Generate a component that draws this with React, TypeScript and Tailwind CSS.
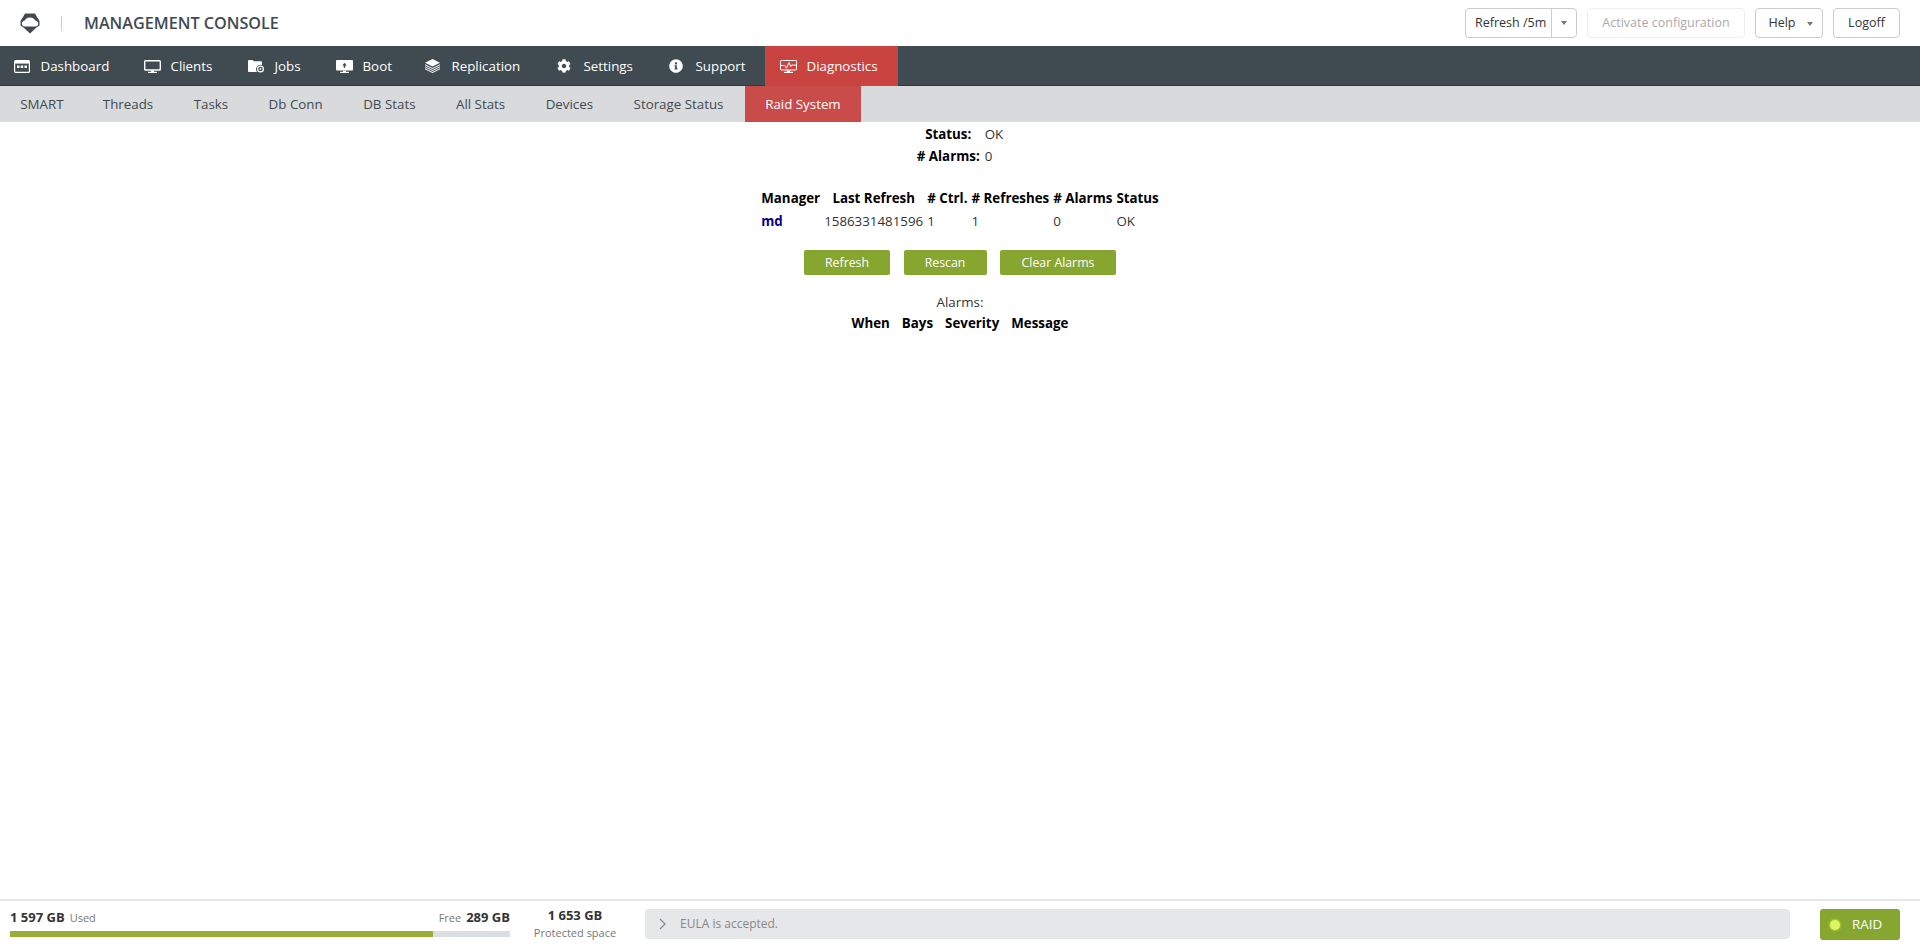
import { FaCog, FaInfoCircle } from "react-icons/fa";

const font = "font-['Open_Sans',sans-serif]";

function IDash() {
  return (
    <svg width="16" height="13" viewBox="0 0 16 13" className="shrink-0">
      <rect x="0.6" y="0.6" width="14.8" height="11.8" rx="1" fill="none" stroke="#fff" strokeWidth="1.2" />
      <rect x="1" y="1" width="14" height="2.600" fill="#fff" />
      <rect x="3" y="5.500" width="2.500" height="2.500" fill="#fff" />
      <rect x="6.700" y="5.500" width="2.500" height="2.500" fill="#fff" />
      <rect x="10.500" y="5.500" width="2.500" height="2.500" fill="#fff" />
    </svg>
  );
}
function IMon() {
  return (
    <svg width="17" height="13" viewBox="0 0 17 13" className="shrink-0">
      <rect x="0.7" y="0.7" width="15.6" height="9.3" rx="0.8" fill="none" stroke="#fff" strokeWidth="1.4" />
      <rect x="7" y="10.500" width="3" height="1.500" fill="#fff" />
      <rect x="4" y="11.800" width="9" height="1.200" fill="#fff" />
    </svg>
  );
}
function IJobs() {
  return (
    <svg width="16" height="13" viewBox="0 0 16 13" className="shrink-0">
      <path d="M0 1a1 1 0 0 1 1-1h3.500l1.500 1.300h7a1 1 0 0 1 1 1v2.700a4.500 4.500 0 0 0-5 7H1a1 1 0 0 1-1-1z" fill="#fff" />
      <circle cx="12.500" cy="9" r="2.900" fill="none" stroke="#fff" strokeWidth="1.200" />
      <circle cx="12.500" cy="9" r="0.900" fill="#fff" />
    </svg>
  );
}
function IBoot() {
  return (
    <svg width="17" height="13" viewBox="0 0 17 13" className="shrink-0">
      <path d="M1 0h15a1 1 0 0 1 1 1v8.500a1 1 0 0 1-1 1H1a1 1 0 0 1-1-1V1a1 1 0 0 1 1-1z" fill="#fff" />
      <path d="M8.500 2.800l2.200 2.700H9.300v2.300H7.700V5.500H6.300z" fill="#3f4b51" />
      <rect x="7" y="10.500" width="3" height="1.500" fill="#fff" />
      <rect x="4" y="11.800" width="9" height="1.200" fill="#fff" />
    </svg>
  );
}
function ILayers() {
  return (
    <svg width="15" height="14" viewBox="0 0 15 14" className="shrink-0">
      <path d="M7.500 0L15 3.800 7.500 7.600 0 3.800z" fill="#fff" />
      <path d="M0 5.200l7.500 3.800L15 5.200v1l-7.500 3.800L0 6.200z" fill="#fff" />
      <path d="M0 7.300l7.500 3.800L15 7.300v1l-7.500 3.800L0 8.300z" fill="#fff" />
      <path d="M0 9.300L7.500 13 15 9.300v1L7.500 14 0 10.300z" fill="#fff" />
    </svg>
  );
}
function IDiag() {
  return (
    <svg width="17" height="13" viewBox="0 0 17 13" className="shrink-0">
      <rect x="0.5" y="0.5" width="16" height="9.500" rx="0.6" fill="none" stroke="#fff" strokeWidth="1" />
      <path d="M1 5.500h4l1.500 2.800L9 2.500l1.800 4 1-1.400H16" fill="none" stroke="#fff" strokeWidth="1" />
      <rect x="7" y="10.500" width="3" height="1.500" fill="#fff" />
      <rect x="4" y="11.800" width="9" height="1.200" fill="#fff" />
    </svg>
  );
}

function Caret() {
  return <span className="w-0 h-0 border-x-[3.5px] border-x-transparent border-t-[4px] border-t-[#777]" />;
}

function NavItem({ icon, label, active, w, pl = "pl-[15px]" }: { icon: React.ReactNode; label: string; active?: boolean; w: string; pl?: string }) {
  return (
    <div className={`flex items-center h-full ${pl} text-[13.33px] font-medium text-white ${w} ${active ? "bg-[#c94441]" : ""}`}>
      <span className="w-[26.5px] flex items-center">{icon}</span>
      <span className="pt-px">{label}</span>
    </div>
  );
}

const sub = ["SMART", "Threads", "Tasks", "Db Conn", "DB Stats", "All Stats", "Devices", "Storage Status"];

export default function App() {
  return (
    <div className={`h-screen flex flex-col bg-white overflow-hidden text-[#333] ${font}`}>
      <header className="h-[46px] shrink-0 flex items-center pl-[20px] pr-[20px]">
        <svg width="20" height="21" viewBox="0 0 20 21" className="shrink-0">
          <path d="M5 0.500h10l2 3.500 2.500 4v4.500l-3 2L10 20.500 3.500 14.500l-3-2V8L3 4z" fill="#3f4b51" />
          <path d="M10 4.500c3 0 4.600 1.500 5.300 3 1.700.4 2.900 1.600 2.900 3.200 0 1.600-1.300 2.800-3 2.800H4.800c-1.700 0-3-1.200-3-2.800 0-1.600 1.200-2.800 2.900-3.200.7-1.500 2.300-3 5.300-3z" fill="#fff" />
        </svg>
        <span className="w-px h-[15px] bg-[#ccc] ml-[21px]" />
        <span className="ml-[22px] text-[16.2px] font-semibold text-[#3f4b51]">MANAGEMENT CONSOLE</span>
        <div className="ml-auto flex items-center text-[12.5px]">
          <div className="flex h-[30px] border border-[#ccc] rounded-[4px] items-stretch">
            <span className="w-[86px] pl-[9px] pt-px flex items-center border-r border-[#ccc]">Refresh /5m</span>
            <span className="w-[24px] flex items-center justify-center"><Caret /></span>
          </div>
          <span className="ml-[10px] w-[158px] h-[30px] pt-px flex items-center justify-center border border-[#eee] rounded-[4px] text-[#aaa]">Activate configuration</span>
          <span className="ml-[10px] w-[68px] h-[30px] pt-px pl-[3px] flex items-center justify-center gap-[11px] border border-[#ccc] rounded-[4px]">Help <Caret /></span>
          <span className="ml-[10px] w-[67px] h-[30px] pt-px flex items-center justify-center border border-[#ccc] rounded-[4px]">Logoff</span>
        </div>
      </header>

      <nav className="h-[40px] shrink-0 flex bg-[#3f4b51] shadow-[inset_0_-1px_0_#2f393e]">
        <NavItem w="w-[129px]" pl="pl-[14px]" icon={<IDash />} label="Dashboard" />
        <NavItem w="w-[104px]" icon={<IMon />} label="Clients" />
        <NavItem w="w-[88px]" icon={<IJobs />} label="Jobs" />
        <NavItem w="w-[89px]" icon={<IBoot />} label="Boot" />
        <NavItem w="w-[132px]" icon={<ILayers />} label="Replication" />
        <NavItem w="w-[112px]" icon={<FaCog size={14} color="#fff" />} label="Settings" />
        <NavItem w="w-[111px]" icon={<FaInfoCircle size={14} color="#fff" />} label="Support" />
        <NavItem w="w-[133px]" active icon={<IDiag />} label="Diagnostics" />
      </nav>

      <div className="h-[36px] shrink-0 flex bg-[#d9dadc] text-[13.33px] text-[#3f4b51]">
        {sub.map((s, i) => (
          <span key={s} className={`pl-[20.25px] pt-px flex items-center ${i === 0 ? "pr-[19px]" : "pr-[20.25px]"}`}>{s}</span>
        ))}
        <span className="ml-px px-[20.5px] pt-px flex items-center bg-[#c94c4a] text-white font-medium">Raid System</span>
      </div>

      <main className="flex-1 flex flex-col items-center text-[13.33px] leading-[18px] text-black">
        <table className="border-separate border-spacing-[2px]">
          <tbody>
            <tr><th className="p-px font-bold">Status:</th><td className="p-px pl-[2px] text-[#333]">OK</td></tr>
            <tr><th className="p-px font-bold"># Alarms:</th><td className="p-px pl-[2px] text-[#333]">0</td></tr>
          </tbody>
        </table>
        <table className="border-separate border-spacing-[2px] mt-[18px]">
          <thead>
            <tr>
              {["Manager", "Last Refresh", "# Ctrl.", "# Refreshes", "# Alarms", "Status"].map((h) => (
                <th key={h} className="p-px font-bold">{h}</th>
              ))}
            </tr>
          </thead>
          <tbody className="text-[#333]">
            <tr>
              <td className="p-px pt-[2px] font-bold text-[#00008b]">md</td>
              <td className="p-px pt-[2px]">1586331481596</td>
              <td className="p-px pt-[2px]">1</td>
              <td className="p-px pt-[2px]">1</td>
              <td className="p-px pt-[2px]">0</td>
              <td className="p-px pt-[2px]">OK</td>
            </tr>
          </tbody>
        </table>
        <div className="flex mt-[17px] gap-[13.5px] text-[12.3px] font-medium text-white">
          <span className="w-[86px] h-[25px] rounded-[2px] bg-[#87a62f] flex items-center justify-center">Refresh</span>
          <span className="w-[83px] h-[25px] rounded-[2px] bg-[#87a62f] flex items-center justify-center">Rescan</span>
          <span className="w-[116px] h-[25px] rounded-[2px] bg-[#87a62f] flex items-center justify-center">Clear Alarms</span>
        </div>
        <div className="mt-[18px] text-[#333]">Alarms:</div>
        <table className="border-separate border-spacing-[2px]">
          <thead>
            <tr>
              {["When", "Bays", "Severity", "Message"].map((h) => (
                <th key={h} className="py-px px-[5px] font-bold">{h}</th>
              ))}
            </tr>
          </thead>
        </table>
      </main>

      <footer className="h-[47px] shrink-0 flex items-start border-t-2 border-[#e4e5e6] pl-[10px] pr-[20px] text-[#333]">
        <div className="w-[500px] mt-[7px]">
          <div className="flex items-baseline h-[21px]">
            <span className="text-[13px] font-bold">1 597 GB</span>
            <span className="ml-[5px] text-[11px] text-[#777]">Used</span>
            <span className="ml-auto text-[11px] text-[#777]">Free</span>
            <span className="ml-[5px] text-[13px] font-bold">289 GB</span>
          </div>
          <div className="h-[6px] mt-[2px] bg-[#dcdfe2]">
            <div className="h-full w-[84.500%] bg-[#97ad35]" />
          </div>
        </div>
        <div className="w-[130px] mr-[5px] flex flex-col items-center mt-[5px]">
          <span className="text-[13px] font-bold leading-[18px]">1 653 GB</span>
          <span className="text-[11px] text-[#777] leading-[18px]">Protected space</span>
        </div>
        <div className="flex-1 mt-[8px] h-[30px] rounded-[4px] bg-[#e6e7e9] flex items-center text-[12px] text-[#888] pl-[14px]">
          <svg width="8" height="12" viewBox="0 0 8 12" className="mr-[13px]"><path d="M1 1l5 5-5 5" fill="none" stroke="#888" strokeWidth="1.2" /></svg>
          EULA is accepted.
        </div>
        <div className="ml-[30px] mt-[8px] w-[80px] h-[31px] rounded-[3px] bg-[#87a62f] flex items-center text-white text-[13.33px] pl-[10px]">
          <span className="w-[10px] h-[10px] rounded-full bg-[#dcf55a] mr-[12px] shadow-[0_0_3px_#dcf55a]" />
          RAID
        </div>
      </footer>
    </div>
  );
}
